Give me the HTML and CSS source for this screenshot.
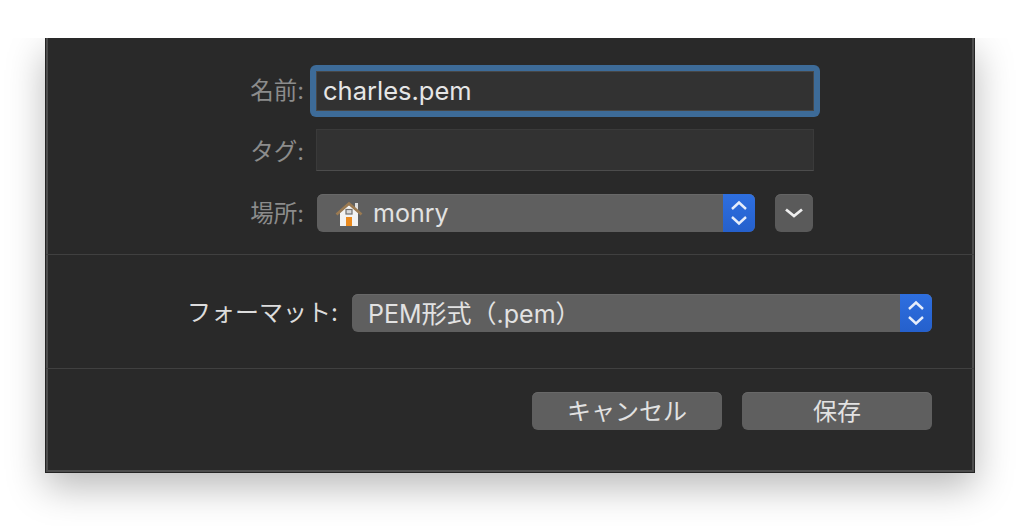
FILE: index.html
```html
<!DOCTYPE html>
<html lang="ja">
<head>
    <meta charset="UTF-8">
    <title>保存</title>
    <link rel="stylesheet" href="styles.css">
</head>
<body>
    <div class="stage">
        <div class="sheet">
            <div class="section-top">
                <div class="row row-name">
                    <label class="label">名前:</label>
                    <div class="focus-ring"><div class="field field-name">charles.pem</div></div>
                </div>
                <div class="row row-tag">
                    <label class="label">タグ:</label>
                    <div class="field field-tag"></div>
                </div>
                <div class="row row-place">
                    <label class="label">場所:</label>
                    <div class="popup popup-place">
                        <svg class="home-icon" viewBox="0 0 28 28" width="28" height="28">
                            <rect x="20" y="4" width="3" height="7" fill="#dedede"/>
                            <path d="M5 13 L14 6 L23 13 V27 H5 Z" fill="#f2f2f2"/>
                            <path d="M1.5 15.5 L14 4.5 L26.5 15.5" fill="none" stroke="#9a7a52" stroke-width="2.8"/>
                            <rect x="11" y="10.5" width="6" height="4.5" fill="#d8d8d8" stroke="#6f6f6f" stroke-width="1.2"/>
                            <rect x="11" y="18" width="6" height="9" fill="#ea8a1e"/>
                        </svg>
                        <span class="popup-text">monry</span>
                        <span class="stepper">
                            <svg viewBox="0 0 32 38" width="32" height="38"><path d="M9 15 L16 8.5 L23 15 M9 23 L16 29.5 L23 23" fill="none" stroke="#e6edfb" stroke-width="2.4"/></svg>
                        </span>
                    </div>
                    <button class="expand">
                        <svg viewBox="0 0 38 38" width="38" height="38"><path d="M11 15.5 L19 22 L27 15.5" fill="none" stroke="#eeeeee" stroke-width="2.8"/></svg>
                    </button>
                </div>
            </div>
            <div class="section-format">
                <label class="label label-format">フォーマット:</label>
                <div class="popup popup-format">
                    <span class="popup-text">PEM形式（.pem）</span>
                    <span class="stepper">
                        <svg viewBox="0 0 32 38" width="32" height="38"><path d="M9 15 L16 8.5 L23 15 M9 23 L16 29.5 L23 23" fill="none" stroke="#e6edfb" stroke-width="2.4"/></svg>
                    </span>
                </div>
            </div>
            <div class="section-actions">
                <button class="action">キャンセル</button>
                <button class="action">保存</button>
            </div>
        </div>
    </div>
</body>
</html>
```

FILE: styles.css
```css
* {
    box-sizing: border-box;
}

body {
    margin: 0;
    padding-top: 38px;
    background-color: #ffffff;
    font-family: Inter, "Noto Sans CJK JP", sans-serif;
    color: #e2e2e2;
}

.stage {
    height: 488px;
    padding: 0 45px;
    overflow: hidden;
}

.sheet {
    width: 930px;
    height: 435px;
    display: flex;
    flex-direction: column;
    background: #292929;
    border: 1px solid #232323;
    border-top: none;
    box-shadow: inset 2px 0 0 #4c4c4c, inset -2px 0 0 #4c4c4c, inset 0 -2px 0 #4c4c4c, 0 14px 36px rgba(0, 0, 0, 0.28);
}

.section-top {
    height: 217px;
    padding-top: 27px;
    border-bottom: 1px solid #404040;
}

.row {
    display: flex;
    align-items: center;
}

.label {
    width: 258px;
    text-align: right;
    font-size: 23.5px;
    color: #8c8c8c;
}

.row-name {
    height: 52px;
}

.row-name .label {
    padding-bottom: 4px;
}

.focus-ring {
    width: 510px;
    height: 52px;
    margin-left: 6px;
    padding: 6px 6px;
    background: #3d6b98;
    border-radius: 6px;
}

.field {
    background: #323232;
    border: 1px solid #474747;
}

.field-name {
    height: 40px;
    padding-left: 6px;
    font-size: 25.5px;
    line-height: 37px;
    color: #e6e6e6;
}

.row-tag {
    height: 42px;
    margin-top: 12px;
}

.field-tag {
    width: 498px;
    height: 42px;
    margin-left: 12px;
    border-color: #3a3a3a;
    border-bottom-color: #4c4c4c;
}

.row-place {
    height: 38px;
    margin-top: 23px;
}

.row-place .label {
    padding-bottom: 2px;
}

.popup {
    display: flex;
    align-items: center;
    height: 38px;
    background: #5f5f5f;
    border-radius: 6px;
    box-shadow: inset 0 1px 0 #686868;
    overflow: hidden;
    font-size: 25px;
    color: #e2e2e2;
}

.popup-text {
    flex: 1;
}

.popup-format .popup-text {
    padding-bottom: 2px;
}

.popup-place {
    width: 438px;
    margin-left: 13px;
    padding-left: 18px;
}

.home-icon {
    margin-right: 10px;
}

.stepper {
    width: 32px;
    height: 38px;
    padding: 0;
    background: linear-gradient(#2e6fe0, #2560cc);
}

.stepper svg {
    display: block;
}

.expand {
    width: 38px;
    height: 38px;
    margin-left: 20px;
    padding: 0;
    background: #5a5a5a;
    border: none;
    border-radius: 6px;
    box-shadow: inset 0 1px 0 #646464;
}

.expand svg {
    display: block;
}

.section-format {
    display: flex;
    align-items: center;
    height: 114px;
    padding-top: 2px;
    border-bottom: 1px solid #404040;
}

.label-format {
    width: 292px;
    padding-bottom: 4px;
    font-size: 24px;
    color: #dcdcdc;
}

.popup-format {
    width: 580px;
    margin-left: 14px;
    padding-left: 16px;
}

.section-actions {
    display: flex;
    justify-content: flex-end;
    gap: 20px;
    padding: 23px 42px 0 0;
}

.action {
    width: 190px;
    height: 38px;
    padding: 0 0 4px;
    background: #5f5f5f;
    border: none;
    border-radius: 6px;
    box-shadow: inset 0 1px 0 #686868;
    font-family: inherit;
    font-size: 24px;
    color: #e2e2e2;
}
```
